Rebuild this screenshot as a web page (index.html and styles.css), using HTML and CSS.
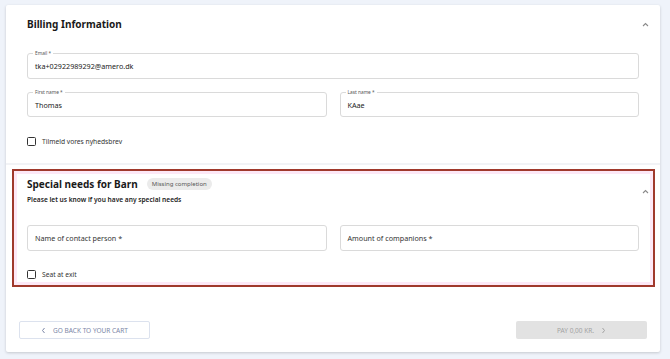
FILE: index.html
```html
<!DOCTYPE html>
<html lang="en">
<head>
  <meta charset="UTF-8">
  <meta name="viewport" content="width=device-width, initial-scale=1.0">
  <title>Checkout - Billing</title>
  <link rel="stylesheet" href="styles.css">
</head>
<body>

  <div class="card">

    <div class="section billing">
      <div class="section-head">
        <h2>Billing Information</h2>
        <svg class="chevron" width="7" height="5" viewBox="0 0 7 5"><path d="M1 4 L3.5 1.5 L6 4" fill="none" stroke="#8a8a8a" stroke-width="1.1"/></svg>
      </div>

      <div class="field email">
        <span class="field-label">Email *</span>
        <span class="field-value">tka+02922989292@amero.dk</span>
      </div>

      <div class="field-row">
        <div class="field">
          <span class="field-label">First name *</span>
          <span class="field-value">Thomas</span>
        </div>
        <div class="field">
          <span class="field-label">Last name *</span>
          <span class="field-value">KAae</span>
        </div>
      </div>

      <label class="check">
        <span class="box"></span>
        Tilmeld vores nyhedsbrev
      </label>
    </div>

    <div class="divider"></div>

    <div class="section special">
      <div class="section-head">
        <div>
          <div class="title-row">
            <h2>Special needs for Barn</h2>
            <span class="badge">Missing completion</span>
          </div>
          <p class="subtitle">Please let us know if you have any special needs</p>
        </div>
        <svg class="chevron" width="7" height="5" viewBox="0 0 7 5"><path d="M1 4 L3.5 1.5 L6 4" fill="none" stroke="#8a8a8a" stroke-width="1.1"/></svg>
      </div>

      <div class="field-row">
        <div class="field">
          <span class="field-placeholder">Name of contact person *</span>
        </div>
        <div class="field">
          <span class="field-placeholder">Amount of companions *</span>
        </div>
      </div>

      <label class="check">
        <span class="box"></span>
        Seat at exit
      </label>
    </div>

    <div class="footer">
      <button class="btn-back">
        <svg width="5" height="7" viewBox="0 0 5 7"><path d="M3.5 1 L1.5 3.5 L3.5 6" fill="none" stroke="#7b86a6" stroke-width="1"/></svg>
        GO BACK TO YOUR CART
      </button>
      <button class="btn-pay" disabled>
        PAY 0,00 KR.
        <svg width="5" height="7" viewBox="0 0 5 7"><path d="M1.5 1 L3.5 3.5 L1.5 6" fill="none" stroke="#a3a3a3" stroke-width="1"/></svg>
      </button>
    </div>

  </div>

</body>
</html>
```

FILE: styles.css
```css
body {
  margin: 0;
  background: #eff3fa;
  font-family: 'Noto Sans', sans-serif;
  color: #222;
}

.card {
  margin: 5px 10px 8px 6px;
  background: #fff;
  box-shadow: 0 1px 3px rgba(0,0,0,0.18);
  border-radius: 2px;
}

.section.billing {
  padding: 11px 21px 16px 21px;
}

.section-head {
  display: flex;
  justify-content: space-between;
  align-items: center;
  margin-right: -10px;
}

h2 {
  margin: 0;
  font-size: 10px;
  line-height: 16px;
  font-weight: 700;
  color: #1a1a1a;
}

.chevron {
  display: block;
}

.field {
  position: relative;
  flex: 1;
  height: 26px;
  border: 1px solid #dadada;
  border-radius: 3px;
  box-sizing: border-box;
  display: flex;
  align-items: center;
  padding: 0 7px;
  font-size: 7.2px;
}

.field.email {
  margin-top: 21px;
}

.field-label {
  position: absolute;
  top: -4px;
  left: 5px;
  padding: 0 2px;
  background: #fff;
  font-size: 4.8px;
  line-height: 7px;
  color: #555;
}

.field-value {
  color: #222;
}

.field-placeholder {
  color: #333;
  font-size: 7.2px;
}

.field-row {
  display: flex;
  gap: 13px;
  margin-top: 13px;
}

.billing .field-row .field {
  height: 25px;
}

.check {
  display: flex;
  align-items: center;
  gap: 6px;
  height: 12px;
  margin-top: 18px;
  font-size: 6.7px;
  color: #333;
}

.check .box {
  width: 9px;
  height: 9px;
  border: 1.3px solid #333;
  border-radius: 1.5px;
  box-sizing: border-box;
}

.divider {
  height: 2px;
  background: #f2f3f6;
}

.section.special {
  margin: 4px 5px 0 6px;
  border: 2px solid #a0392c;
  box-shadow: inset 0 0 0 3px #fde8f6;
  padding: 6px 14px 5px 13px;
}

.title-row {
  display: flex;
  align-items: center;
  gap: 9px;
  height: 14px;
}

.badge {
  background: #ebebeb;
  border-radius: 7px;
  padding: 0 5px;
  height: 12px;
  line-height: 12px;
  font-size: 6px;
  color: #555;
}

.subtitle {
  margin: 4px 0 0;
  font-size: 6.6px;
  line-height: 10px;
  font-weight: 600;
  color: #222;
}

.special .field-row {
  margin-top: 20px;
}

.special .check {
  margin-top: 17px;
}

.footer {
  display: flex;
  justify-content: space-between;
  padding: 34px 13px 13px 13px;
}

.footer button {
  height: 18px;
  width: 131px;
  font-family: 'Noto Sans', sans-serif;
  font-size: 6.5px;
  display: flex;
  align-items: center;
  justify-content: center;
  gap: 7px;
  border-radius: 2px;
  padding: 0;
}

.btn-back {
  background: #fff;
  border: 1px solid #dce2ee;
  color: #7b86a6;
}

.btn-pay {
  background: #e2e2e2;
  border: none;
  color: #a3a3a3;
}
```
